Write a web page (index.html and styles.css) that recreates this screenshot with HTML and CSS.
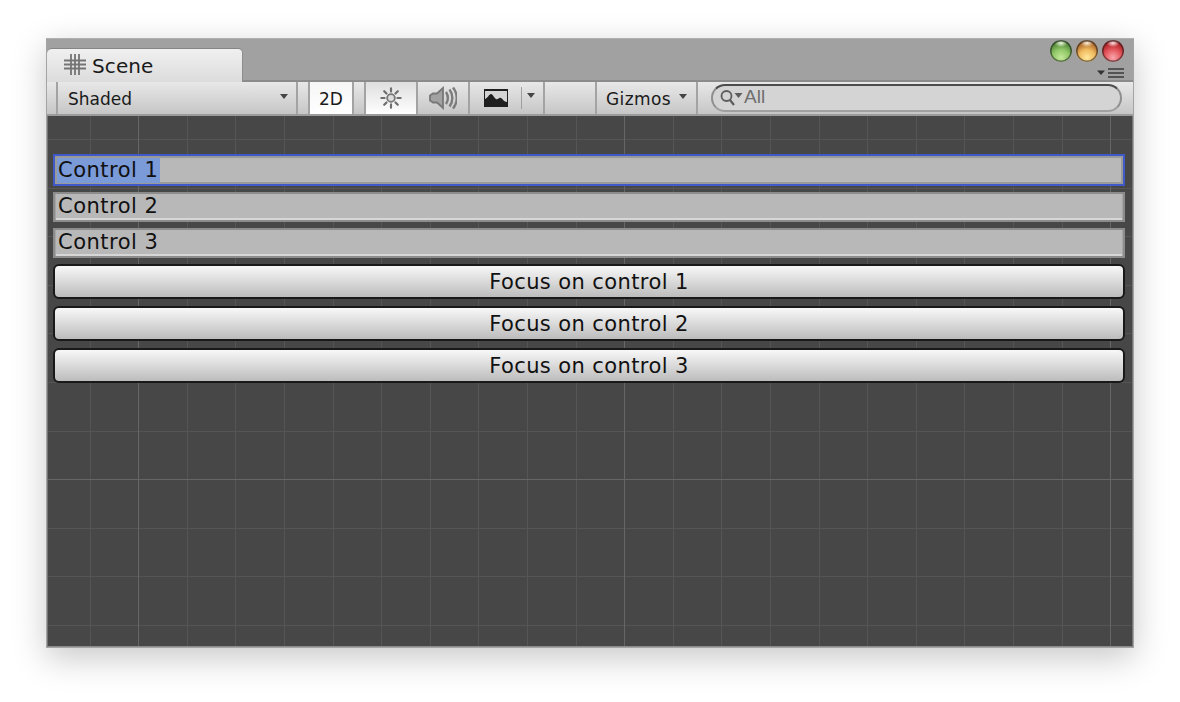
FILE: index.html
```html
<!DOCTYPE html>
<html lang="en">
<head>
<meta charset="utf-8">
<title>Scene</title>
<link rel="stylesheet" href="styles.css">
</head>
<body>
<div class="window">
  <div class="titlebar">
    <div class="tab">
      <svg class="tab-icon" width="22" height="21" viewBox="0 0 22 21"><path d="M7 0v21M11 0v21M15 0v21M0 6.500h22M0 10.500h22M0 14.500h22" stroke="#747474" stroke-width="1.800" fill="none"/></svg>
      <span>Scene</span>
    </div>
    <div class="window-controls">
      <div class="lights">
        <span class="light green"></span>
        <span class="light orange"></span>
        <span class="light red"></span>
      </div>
      <div class="pane-menu">
        <svg width="28" height="10" viewBox="0 0 28 10"><path d="M1 2.500h8L5 7z" fill="#333"/><path d="M12 1h16M12 5h16M12 9h16" stroke="#3a3a3a" stroke-width="1.600"/></svg>
      </div>
    </div>
  </div>
  <div class="toolbar">
    <div class="tb-item tb-lead"></div>
    <div class="tb-item tb-shaded"><span>Shaded</span><i class="caret"></i></div>
    <div class="tb-item tb-gap tb-gap-wide"></div>
    <div class="tb-item tb-2d"><span>2D</span></div>
    <div class="tb-item tb-gap tb-gap-wide"></div>
    <div class="tb-item tb-icon tb-on">
      <svg class="soft" width="22" height="22" viewBox="0 0 24 24"><circle cx="12" cy="12" r="4.200" fill="#dcdcdc" stroke="#777" stroke-width="2"/><path d="M12 1.500v3.500M12 19v3.500M1.500 12H5M19 12h3.500M4.600 4.600l2.500 2.500M16.900 16.900l2.500 2.500M4.600 19.400l2.500-2.500M16.900 7.100l2.500-2.500" stroke="#6e6e6e" stroke-width="2.400" stroke-linecap="round" fill="none"/></svg>
    </div>
    <div class="tb-item tb-icon">
      <svg class="soft" width="28" height="24" viewBox="0 0 28 24"><path d="M1 9.500l3-2h4L14 2v20l-6-5.500H4l-3-2z" fill="#a2a2a2" stroke="#787878" stroke-width="1.800"/><path d="M17 6c2.500 4 2.500 8 0 12M20.500 3.500c3.800 5 3.800 12 0 17M24 1.500c5 6.500 5 14.500 0 21" stroke="#7c7c7c" stroke-width="2.400" fill="none"/></svg>
    </div>
    <div class="tb-item tb-image">
      <svg width="24" height="18" viewBox="0 0 24 18"><rect width="24" height="18" fill="#1f1f1f"/><path d="M1 2h22v11c-3 0-4-3-6-4s-3 2-5 1-3-5-5-5-3 4-6 5z" fill="#d4d4d4"/></svg>
      <i class="divider"></i>
      <i class="caret"></i>
    </div>
    <div class="tb-item tb-blank"></div>
    <div class="tb-item tb-gizmos"><span>Gizmos</span><i class="caret"></i></div>
    <div class="search">
      <svg width="24" height="18" viewBox="0 0 24 18"><circle cx="6.500" cy="8" r="5" fill="none" stroke="#5c5c5c" stroke-width="1.800"/><path d="M10 12l4 5" stroke="#5c5c5c" stroke-width="2.200"/><path d="M14.500 5h8l-4 5z" fill="#5c5c5c"/></svg>
      <span>All</span>
    </div>
  </div>
  <div class="scene">
    <div class="fields">
      <div class="field field-focus"><span class="selected">Control 1</span></div>
      <div class="field">Control 2</div>
      <div class="field">Control 3</div>
    </div>
    <div class="buttons">
      <div class="button">Focus on control 1</div>
      <div class="button">Focus on control 2</div>
      <div class="button">Focus on control 3</div>
    </div>
  </div>
</div>
</body>
</html>
```

FILE: styles.css
```css
* { box-sizing: border-box; }

html, body { margin: 0; padding: 0; height: 100%; background: #fff; overflow: hidden; }

body { font-family: "DejaVu Sans", sans-serif; color: #111; padding: 38px 0 0 46px; }

.window {
  width: 1088px;
  height: 610px;
  display: flex;
  flex-direction: column;
  border: 1px solid #a4a4a4;
  border-top-color: #b0b0b0;
  box-shadow: 0 10px 32px rgba(0, 0, 0, .22);
}

.titlebar {
  height: 43px;
  flex: none;
  display: flex;
  justify-content: space-between;
  align-items: flex-end;
  background: #a1a1a1;
  border-bottom: 2px solid #8b8b8b;
}

.tab {
  width: 196px;
  height: 34px;
  margin-bottom: -2px;
  display: flex;
  align-items: center;
  gap: 6px;
  padding: 0 0 0 17px;
  font-size: 20px;
  letter-spacing: .1px;
  color: #1a1a1a;
  background: linear-gradient(#f0f0f0, #dcdcdc);
  border-top: 1px solid #858585;
  border-right: 1px solid #8d8d8d;
  border-radius: 5px 5px 0 0;
  position: relative;
  z-index: 1;
}

.tab-icon { flex: none; margin-bottom: 3px; }

.window-controls {
  align-self: stretch;
  display: flex;
  flex-direction: column;
  align-items: flex-end;
  padding: 1px 9px 0 0;
}

.lights { display: flex; gap: 4px; }

.light {
  width: 22px;
  height: 22px;
  border-radius: 50%;
  display: block;
  box-shadow: inset 0 0 0 1.5px rgba(30, 30, 30, .55);
}

.green {
  background: radial-gradient(ellipse 30% 18% at 50% 14%, #f0fbe0 0, transparent 100%),
              radial-gradient(circle at 50% 80%, #c4e89a 0, #93c96a 38%, #558a3c 70%, #2a5a26 100%);
}

.orange {
  background: radial-gradient(ellipse 30% 18% at 50% 14%, #fff3dc 0, transparent 100%),
              radial-gradient(circle at 50% 80%, #ffe99c 0, #f0bb60 38%, #b06a2c 70%, #6a3a1c 100%);
}

.red {
  background: radial-gradient(ellipse 30% 18% at 50% 14%, #ffe4e4 0, transparent 100%),
              radial-gradient(circle at 50% 80%, #f8a8ae 0, #e65a60 38%, #b02428 70%, #641e20 100%);
}

.pane-menu { display: flex; margin-top: 6px; height: 10px; }

.toolbar {
  height: 34px;
  flex: none;
  display: flex;
  background: linear-gradient(#e8e8e8, #c6c6c6);
  border-bottom: 2px solid #9b9b9b;
  font-size: 17px;
  color: #1a1a1a;
}

.tb-item {
  height: 100%;
  display: flex;
  align-items: center;
  flex: none;
  padding-top: 2px;
  border-right: 2px solid #a3a3a3;
}

.tb-lead { width: 11px; }

.tb-shaded { width: 240px; justify-content: space-between; padding: 2px 8px 0 10px; }

.tb-gap { width: 11px; }

.tb-gap-wide { width: 12px; }

.tb-2d { width: 44px; justify-content: center; background: linear-gradient(#f6f6f6, #fff); }

.tb-icon { width: 52px; justify-content: center; padding-top: 0; }

.soft { filter: blur(.35px); }

.tb-on { background: linear-gradient(#dedede, #fff); }

.tb-image { width: 75px; padding: 0 0 0 14px; }

.divider {
  width: 1px;
  height: 22px;
  margin: 0 5px 0 13px;
  background: #9f9f9f;
}

.tb-blank { width: 52px; }

.tb-gizmos { width: 101px; justify-content: space-between; padding: 2px 9px 0 9px; letter-spacing: .4px; }

.caret {
  width: 0;
  height: 0;
  border-left: 4px solid transparent;
  border-right: 4px solid transparent;
  border-top: 5px solid #444;
  margin-top: -5px;
}

.search {
  width: 411px;
  height: 28px;
  margin: 0 0 0 13px;
  align-self: center;
  display: flex;
  align-items: center;
  gap: 0;
  padding: 0 0 3px 7px;
  font-family: "Liberation Sans", Arial, sans-serif;
  font-size: 19px;
  color: #6e6e6e;
  background: #d4d4d4;
  border: 2px solid #8f8f8f;
  border-top-color: #4c4c4c;
  border-bottom-color: #a0a0a0;
  border-radius: 14px;
}

.scene {
  flex: 1;
  min-height: 0;
  padding: 38px 7px 0 5px;
  border-left: 1px solid #747474;
  border-right: 1px solid #747474;
  border-bottom: 1px solid #8a8a8a;
  background-color: #474747;
  background-image:
    repeating-linear-gradient(90deg, transparent 0 90.2px, #666 90.2px 91.2px, transparent 91.2px 486px),
    repeating-linear-gradient(180deg, transparent 0 363px, #666 363px 364px, transparent 364px 486px),
    repeating-linear-gradient(90deg, transparent 0 41.6px, #555 41.6px 42.6px, transparent 42.6px 48.6px),
    repeating-linear-gradient(180deg, transparent 0 23px, #555 23px 24px, transparent 24px 48.6px);
}

.fields { display: flex; flex-direction: column; gap: 6px; }

.field {
  height: 30px;
  display: flex;
  align-items: center;
  padding: 0 0 2px 3px;
  font-size: 21px;
  letter-spacing: .5px;
  color: #111;
  background: #b8b8b8;
  border: 2px solid #8c8c8c;
  box-shadow: inset 1px 0 #a6a6a6, inset -1px 0 #a6a6a6, inset 0 -2px #d6d6d6;
}

.field-focus {
  height: 32px;
  padding-bottom: 0;
  border-color: #3f59c8;
  box-shadow: inset 2px 0 #9a9a9a, inset -2px 0 #9a9a9a, inset 0 2px #9a9a9a, inset 0 -2px #9a9a9a;
}

.selected {
  background: #7a9ad8;
  padding-right: 2px;
  margin-left: -1px;
  padding-left: 1px;
  line-height: 25px;
}

.buttons { display: flex; flex-direction: column; gap: 7px; margin-top: 6px; }

.button {
  height: 35px;
  display: flex;
  align-items: center;
  justify-content: center;
  padding: 0;
  font-size: 21px;
  letter-spacing: .4px;
  color: #111;
  background: linear-gradient(#f8f8f8, #bcbcbc);
  border: 2px solid #191919;
  border-radius: 6px;
}
```
